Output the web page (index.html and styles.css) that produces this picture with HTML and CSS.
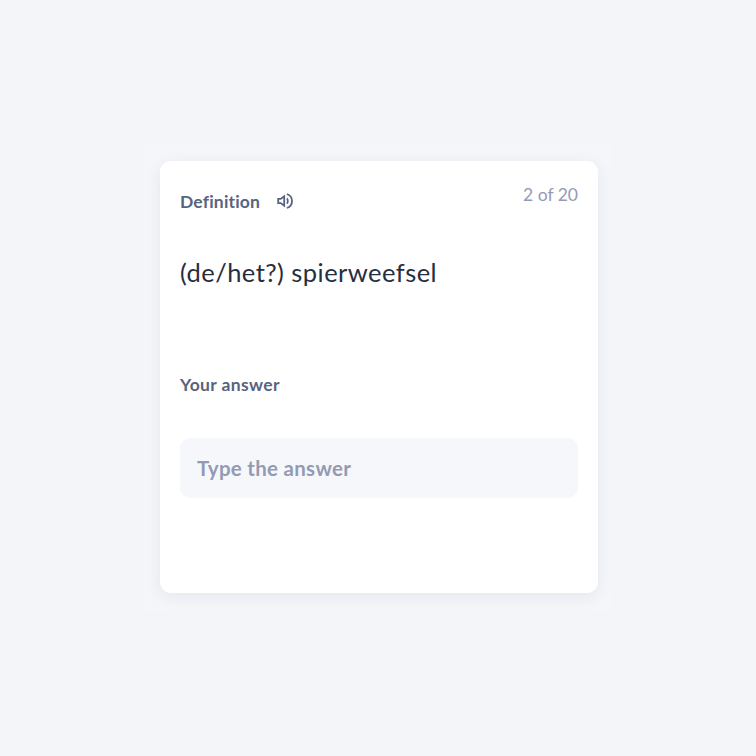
FILE: index.html
```html
<!DOCTYPE html>
<html lang="en">
  <head>
    <meta charset="UTF-8" />
    <meta name="viewport" content="width=device-width, initial-scale=1.0" />
    <title>Definition</title>
    <link rel="stylesheet" href="styles.css">
  </head>
  <body>
    <main class="stage">
      <section class="card">
        <header class="card-header">
          <div class="label">
            <span class="label-text">Definition</span>
            <button class="audio" type="button" aria-label="Play audio">
              <svg viewBox="0 0 18 18" width="18" height="18">
                <path d="M2.2 6.9h2.5L8.2 4.3v9.4L4.7 11.1H2.2z" />
                <path d="M10.9 6.4c1.2 1.3 1.2 3.9 0 5.2" />
                <path d="M10.9 2c6.8 2.2 6.8 11.8 0 14" />
              </svg>
            </button>
          </div>
          <span class="progress">2 of 20</span>
        </header>

        <p class="prompt">(de/het?) spierweefsel</p>

        <label class="answer-label" for="answer">Your answer</label>
        <input class="answer" id="answer" type="text" placeholder="Type the answer" />
      </section>
    </main>
  </body>
</html>
```
FILE: styles.css
```css
* {
  box-sizing: border-box;
}
body {
  margin: 0;
  height: 756px;
  padding: 146px 144px;
  background: #f3f5f9;
  font-family: Lato, "Open Sans", sans-serif;
  font-variant-ligatures: none;
  color: #282e3e;
}
.stage {
  width: 468px;
  height: 466px;
  padding: 15px 14px 19px 16px;
  background: #f4f6fa;
}
.card {
  height: 432px;
  padding: 20px;
  background: white;
  border-radius: 11px;
  box-shadow: 0 4px 16px rgba(40, 46, 62, 0.08);
}
.card-header {
  display: flex;
  justify-content: space-between;
  height: 56px;
}
.label {
  display: flex;
  align-items: center;
  height: 42px;
}
.label-text,
.answer-label {
  font-size: 17.5px;
  font-weight: bold;
  line-height: 24px;
  color: #586380;
}
.label-text {
  width: 80px;
  letter-spacing: 0.18px;
}
.audio {
  display: flex;
  margin: 0 0 2px 16px;
  padding: 0;
  border: none;
  background: none;
  cursor: pointer;
}
.audio svg {
  fill: none;
  stroke: #586380;
  stroke-width: 1.8;
}
.progress {
  font-size: 17.5px;
  line-height: 28px;
  color: #939bb4;
}
.prompt {
  margin: 17px 0 0;
  height: 119px;
  font-size: 25.5px;
  line-height: 36px;
  letter-spacing: 0.45px;
}
.answer-label {
  display: block;
  height: 65px;
  letter-spacing: 0.35px;
}
.answer {
  display: block;
  width: 398px;
  height: 60px;
  padding: 0 17px;
  border: none;
  border-radius: 10px;
  background: #f6f7fb;
  font-family: inherit;
  font-size: 20.5px;
  font-weight: bold;
  letter-spacing: 0.28px;
  color: #282e3e;
}
.answer::placeholder {
  color: #939bb4;
}
```
